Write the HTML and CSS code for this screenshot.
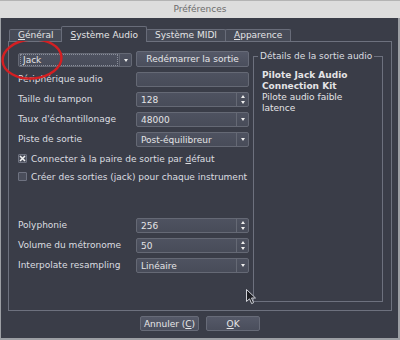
FILE: index.html
```html
<!DOCTYPE html>
<html lang="fr">
<head>
    <meta charset="UTF-8">
    <title>Préférences</title>
    <link rel="stylesheet" href="styles.css">
</head>
<body>
    <div class="window">
        <div class="titlebar">Préférences</div>

        <div class="dialog">
            <div class="tabs">
                <div class="tab"><u>G</u>énéral</div>
                <div class="tab active"><u>S</u>ystème Audio</div>
                <div class="tab">Système MIDI</div>
                <div class="tab"><u>A</u>pparence</div>
            </div>

            <div class="pane">
                <div class="form">
                    <div class="field combo jack">
                        <span class="focus">Jack</span>
                        <span class="arrow"><i class="down"></i></span>
                    </div>
                    <button class="btn">Redémarrer la sortie</button>

                    <div class="label">Périphérique audio</div>
                    <div class="field"></div>

                    <div class="label">Taille du tampon</div>
                    <div class="field spin">
                        <span class="value">128</span>
                        <span class="arrow"><i class="up"></i><i class="down"></i></span>
                    </div>

                    <div class="label">Taux d'échantillonage</div>
                    <div class="field combo">
                        <span class="value">48000</span>
                        <span class="arrow"><i class="down"></i></span>
                    </div>

                    <div class="label">Piste de sortie</div>
                    <div class="field combo">
                        <span class="value">Post-équilibreur</span>
                        <span class="arrow"><i class="down"></i></span>
                    </div>

                    <div class="check">
                        <span class="box checked">
                            <svg width="7" height="7" viewBox="0 0 7 7"><path d="M1 1L6 6M6 1L1 6" stroke="#f2f2f2" stroke-width="1.6"/></svg>
                        </span>
                        <span class="text">Connecter à la paire de sortie par <u>d</u>éfaut</span>
                    </div>
                    <div class="check">
                        <span class="box"></span>
                        <span class="text">Créer des sorties (jack) pour chaque instrument</span>
                    </div>

                    <div class="spacer"></div>

                    <div class="label">Polyphonie</div>
                    <div class="field spin">
                        <span class="value">256</span>
                        <span class="arrow"><i class="up"></i><i class="down"></i></span>
                    </div>

                    <div class="label">Volume du métronome</div>
                    <div class="field spin">
                        <span class="value">50</span>
                        <span class="arrow"><i class="up"></i><i class="down"></i></span>
                    </div>

                    <div class="label">Interpolate resampling</div>
                    <div class="field combo">
                        <span class="value">Linéaire</span>
                        <span class="arrow"><i class="down"></i></span>
                    </div>
                </div>

                <fieldset class="details">
                    <legend>Détails de la sortie audio</legend>
                    <p><strong>Pilote Jack Audio Connection Kit</strong></p>
                    <p>Pilote audio faible latence</p>
                </fieldset>
            </div>

            <div class="actions">
                <button class="btn">Annuler (<u>C</u>)</button>
                <button class="btn"><u>O</u>K</button>
            </div>
        </div>

        <!-- red mark drawn over the output combo -->
        <svg class="highlight" width="70" height="84" viewBox="0 0 70 84">
            <ellipse cx="32" cy="59" rx="29.5" ry="19.5" transform="rotate(-4 32 59)" fill="none" stroke="#d41f22" stroke-width="2.4"/>
        </svg>

        <svg class="cursor" width="11" height="16" viewBox="0 0 11 16">
            <path d="M0.5 0.5V12.5L3.5 9.8L5.6 14.6L7.6 13.7L5.5 9H9.5Z" fill="#1e1f24" stroke="#d0d2d8" stroke-width="1"/>
        </svg>
    </div>
</body>
</html>
```

FILE: styles.css
```css
body {
    margin: 0;
    font-family: "DejaVu Sans", sans-serif;
    font-size: 9px;
}
.window {
    position: relative;
    width: 400px;
    height: 340px;
    display: flex;
    flex-direction: column;
    background: #9c9fa4;
    overflow: hidden;
}
.titlebar {
    height: 18px;
    line-height: 17px;
    text-align: center;
    color: #6c6c6c;
    background: #dddddd;
    border-top: 1px solid #b4b4b4;
    box-sizing: border-box;
}
.dialog {
    flex: 1;
    margin: 0 2px 2px 1px;
    padding: 8px 6px 0 7px;
    background: #3a3d48;
    color: #e4e4e6;
    display: flex;
    flex-direction: column;
}
.tabs {
    display: flex;
    align-items: flex-end;
    height: 15px;
    margin-left: 1px;
    position: relative;
    z-index: 1;
}
.tab {
    height: 12px;
    line-height: 11px;
    padding: 0 8px;
    box-sizing: border-box;
    border: 1px solid #686c79;
    border-bottom: none;
    border-radius: 2px 2px 0 0;
    background: #474b57;
    white-space: nowrap;
}
.tab + .tab {
    margin-left: -1px;
}
.tab.active {
    height: 16px;
    line-height: 15px;
    margin-bottom: -1px;
    padding-top: 1px;
    background: #3a3d48;
}
.pane {
    height: 270px;
    box-sizing: border-box;
    border: 1px solid #6d717e;
    padding: 9px 8px 8px 9px;
    display: flex;
    gap: 4px;
}
.form {
    width: 231px;
    flex: none;
    display: grid;
    grid-template-columns: 114px 113px;
    grid-template-rows: 16px 15px 15px 15px 15px 13px 13px 25px 15px 15px 15px;
    column-gap: 4px;
    row-gap: 5px;
    align-content: start;
}
.label {
    line-height: 15px;
    white-space: nowrap;
    color: #dcdde0;
}
.field {
    height: 15px;
    box-sizing: border-box;
    border: 1px solid #656975;
    border-radius: 2px;
    background: linear-gradient(#4e5260, #484c59);
    display: flex;
    align-items: center;
}
.value {
    flex: 1;
    padding-left: 4px;
    white-space: nowrap;
    overflow: hidden;
}
.arrow {
    width: 11px;
    height: 100%;
    border-left: 1px solid #656975;
    display: flex;
    flex-direction: column;
    align-items: center;
    justify-content: center;
    gap: 3px;
}
.arrow i {
    width: 0;
    height: 0;
    border-left: 2.5px solid transparent;
    border-right: 2.5px solid transparent;
}
.arrow .down {
    border-top: 3px solid #eeeeee;
}
.arrow .up {
    border-bottom: 3px solid #eeeeee;
}
.jack {
    height: 14px;
    align-self: end;
}
.focus {
    flex: 1;
    margin: 1px;
    padding-left: 2px;
    line-height: 10px;
    border: 1px dotted #8b8f9b;
}
.btn {
    font: inherit;
    color: #e6e6e8;
    border: 1px solid #676b78;
    border-radius: 2px;
    background: linear-gradient(#555968, #4a4e5c);
    padding: 0 3px;
    height: 16px;
    line-height: 13px;
    white-space: nowrap;
}
.check {
    grid-column: 1 / -1;
    min-width: 0;
    display: flex;
    align-items: center;
    gap: 4px;
    overflow: hidden;
    color: #dcdde0;
}
.check .text {
    flex: 1;
    min-width: 0;
    white-space: nowrap;
    overflow: hidden;
}
.box {
    flex: none;
    width: 9px;
    height: 9px;
    box-sizing: border-box;
    border: 1px solid #6e7280;
    border-radius: 1px;
    background: #4a4e5b;
    display: flex;
    align-items: center;
    justify-content: center;
}
.box svg {
    display: block;
}
.spacer {
    grid-column: 1 / -1;
}
.details {
    flex: 1;
    min-width: 0;
    margin: 0;
    padding: 8px 6px 0 8px;
    border: 1px solid #6d717e;
}
.details legend {
    padding: 0 2px;
    margin-left: -4px;
    line-height: 11px;
    color: #dcdde0;
}
.details p {
    margin: 0;
    line-height: 11px;
}
.actions {
    display: flex;
    justify-content: center;
    gap: 7px;
    margin-top: 5px;
}
.actions .btn {
    min-width: 54px;
    height: 15px;
    line-height: 12px;
}
.highlight {
    position: absolute;
    left: 0;
    top: 0;
}
.cursor {
    position: absolute;
    left: 246px;
    top: 289px;
}
```
